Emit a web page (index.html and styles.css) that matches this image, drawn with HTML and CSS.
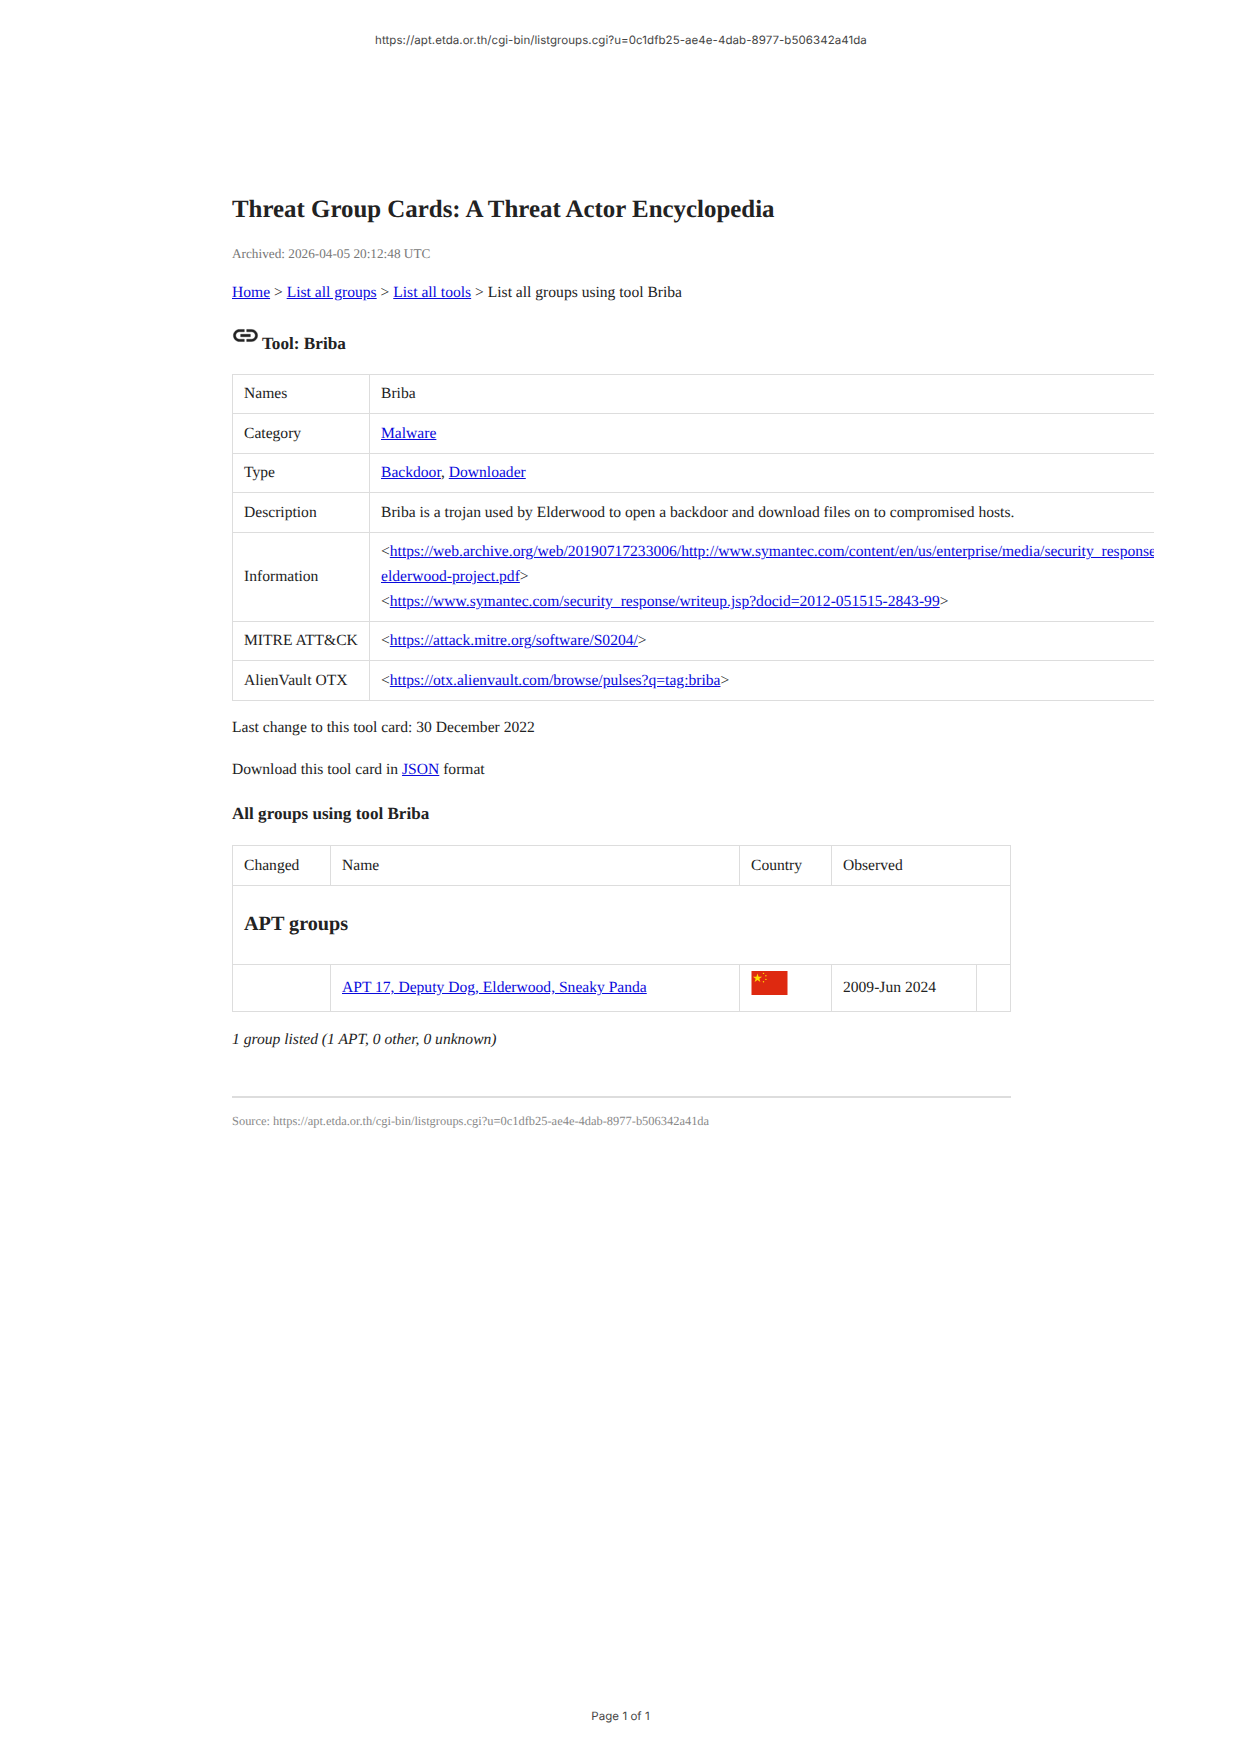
FILE: index.html
```html
<!DOCTYPE html>
<html lang="en">
<head>
<meta charset="utf-8">
<title>Threat Group Cards: A Threat Actor Encyclopedia</title>
<link rel="stylesheet" href="styles.css">
</head>
<body>
<header class="page-url">https://apt.etda.or.th/cgi-bin/listgroups.cgi?u=0c1dfb25-ae4e-4dab-8977-b506342a41da</header>
<main class="content">
  <h1 class="title">Threat Group Cards: A Threat Actor Encyclopedia</h1>
  <p class="archived">Archived: 2026-04-05 20:12:48 UTC</p>
  <p class="crumbs"><a href="#">Home</a> &gt; <a href="#">List all groups</a> &gt; <a href="#">List all tools</a> &gt; List all groups using tool Briba</p>
  <h2 class="tool-title"><svg class="link-icon" viewBox="0 0 24 24" aria-hidden="true"><path d="M3.9 12c0-1.71 1.39-3.1 3.1-3.1h4V7H7c-2.76 0-5 2.24-5 5s2.24 5 5 5h4v-1.9H7c-1.71 0-3.1-1.39-3.1-3.1zM8 13h8v-2H8v2zm9-6h-4v1.9h4c1.71 0 3.1 1.39 3.1 3.1s-1.39 3.1-3.1 3.1h-4V17h4c2.76 0 5-2.24 5-5s-2.24-5-5-5z"/></svg> Tool: Briba</h2>
  <div class="clip">
    <table class="grid tool-table">
      <colgroup><col class="c-label"><col class="c-value"></colgroup>
      <tr><td class="nowrap">Names</td><td>Briba</td></tr>
      <tr><td class="nowrap">Category</td><td><a href="#">Malware</a></td></tr>
      <tr><td class="nowrap">Type</td><td><a href="#">Backdoor</a>, <a href="#">Downloader</a></td></tr>
      <tr><td class="nowrap">Description</td><td>Briba is a trojan used by Elderwood to open a backdoor and download files on to compromised hosts.</td></tr>
      <tr><td class="nowrap">Information</td><td>&lt;<a href="#">https://web.archive.org/web/20190717233006/http://www.symantec.com/content/en/us/enterprise/media/security_response/whitepapers/the-<br>elderwood-project.pdf</a>&gt;<br>&lt;<a href="#">https://www.symantec.com/security_response/writeup.jsp?docid=2012-051515-2843-99</a>&gt;</td></tr>
      <tr><td class="nowrap">MITRE ATT&amp;CK</td><td>&lt;<a href="#">https://attack.mitre.org/software/S0204/</a>&gt;</td></tr>
      <tr><td class="nowrap">AlienVault OTX</td><td>&lt;<a href="#">https://otx.alienvault.com/browse/pulses?q=tag:briba</a>&gt;</td></tr>
    </table>
  </div>
  <p class="change">Last change to this tool card: 30 December 2022</p>
  <p class="download">Download this tool card in <a href="#">JSON</a> format</p>
  <h3 class="groups-title">All groups using tool Briba</h3>
  <table class="grid groups-table">
    <colgroup><col class="g1"><col class="g2"><col class="g3"><col class="g4"><col class="g5"></colgroup>
    <tr><td>Changed</td><td>Name</td><td>Country</td><td colspan="2">Observed</td></tr>
    <tr><td colspan="5" class="section">APT groups</td></tr>
    <tr class="group-row"><td></td><td><a href="#">APT 17, Deputy Dog, Elderwood, Sneaky Panda</a></td><td class="flag-cell"><svg class="flag" viewBox="0 0 30 20" aria-label="China"><rect width="30" height="20" fill="#de2910"/><polygon fill="#ffde00" points="5,2 5.9,4.8 8.8,4.8 6.5,6.5 7.4,9.2 5,7.6 2.6,9.2 3.5,6.5 1.2,4.8 4.1,4.8"/><circle cx="10" cy="2" r=".6" fill="#ffde00"/><circle cx="12" cy="4" r=".6" fill="#ffde00"/><circle cx="12" cy="7" r=".6" fill="#ffde00"/><circle cx="10" cy="9" r=".6" fill="#ffde00"/></svg></td><td>2009-Jun 2024</td><td></td></tr>
  </table>
  <p class="listed">1 group listed (1 APT, 0 other, 0 unknown)</p>
  <hr class="rule">
  <p class="source">Source: https://apt.etda.or.th/cgi-bin/listgroups.cgi?u=0c1dfb25-ae4e-4dab-8977-b506342a41da</p>
</main>
<footer class="page-num">Page 1 of 1</footer>
</body>
</html>
```
FILE: styles.css
```css
html, body { margin: 0; padding: 0; background: #fff; }
body {
  width: 1242px;
  height: 1756px;
  overflow: hidden;
  display: flex;
  flex-direction: column;
  font-family: "Liberation Serif", serif;
  font-size: 15.58px;
  line-height: 24.6px;
  color: #222;
  text-rendering: geometricPrecision;
}
a { color: #0a0adc; text-decoration: underline; }
.page-url, .page-num {
  font-family: "Inter", sans-serif;
  font-size: 11.5px;
  letter-spacing: 0.06px;
  line-height: 16px;
  color: #444;
  text-align: center;
}
.page-url { padding-top: 32px; }
.page-num { margin-top: auto; padding-bottom: 32px; padding-right: 1px; }
.content { width: 779px; margin: 145px 0 0 232px; }
.title { margin: 0; font-size: 24.9px; line-height: 34px; color: #222; }
.archived { margin: 17px 0 0; font-size: 13.25px; line-height: 20px; color: #777; }
.crumbs { margin: 17px 0 0; }
.tool-title { margin: 15px 0 0; font-size: 17.2px; line-height: 30px; }
.link-icon { width: 29px; height: 29px; margin: 0 -2px 0 -1px; vertical-align: -1px; fill: #222; stroke: #222; stroke-width: .35; }
.clip { width: 922px; overflow: hidden; margin-top: 15px; }
.grid { border-collapse: collapse; table-layout: fixed; }
.grid td { border: 1px solid #ddd; padding: 7.5px 11px 6.5px; vertical-align: middle; }
.nowrap { white-space: nowrap; }
.tool-table { width: 1100px; }
.c-label { width: 137px; }
.groups-table { width: 778px; }
.g1 { width: 98px; } .g2 { width: 409px; } .g3 { width: 92px; } .g4 { width: 145px; } .g5 { width: 34px; }
.grid td.section { font-size: 20.2px; font-weight: bold; padding: 27.5px 11px; line-height: 23px; }
.group-row td { height: 32px; }
.grid td.flag-cell { vertical-align: top; padding: 6px 11px 0 10.5px; }
.flag { display: block; width: 37px; height: 24px; }
.change { margin: 15px 0 0; }
.download { margin: 17px 0 0; }
.groups-title { margin: 18px 0 0; font-size: 17.1px; line-height: 28px; }
.groups-table { margin-top: 17px; }
.listed { margin: 16px 0 0; font-style: italic; }
.rule { margin: 44px 0 0; border: 0; border-top: 2px solid #ddd; }
.source { margin: 14px 0 0; font-size: 12.44px; line-height: 18px; color: #888; }
```
